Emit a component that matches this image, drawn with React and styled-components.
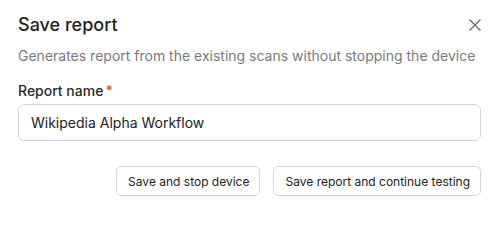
import { createGlobalStyle } from "styled-components";
import styled from "styled-components";

const GlobalStyle = createGlobalStyle`
  html, body {
    margin: 0;
    background: #fff;
    font-family: Inter, "Noto Sans", sans-serif;
  }
`;

const Dialog = styled.div`
  width: 501px;
  height: 214px;
  box-sizing: border-box;
  padding: 14px 20px 0 18px;
  background: #fff;
`;

const Header = styled.div`
  display: flex;
  justify-content: space-between;
  align-items: center;
`;

const Title = styled.h2`
  margin: 0;
  font-size: 18px;
  font-weight: 500;
  color: #1f1f1f;
  line-height: 22px;
`;

const CloseButton = styled.button`
  border: none;
  background: none;
  padding: 0;
  width: 12px;
  height: 12px;
  display: flex;
  align-items: center;
  justify-content: center;
  cursor: pointer;
  color: #6b6b6b;
`;

const Subtitle = styled.p`
  margin: 10px 0 0;
  font-size: 14px;
  line-height: 20px;
  color: #7a7a7a;
`;

const Label = styled.label`
  display: block;
  margin-top: 16px;
  font-size: 14px;
  font-weight: 500;
  line-height: 18px;
  color: #2a2a2a;
`;

const Required = styled.span`
  color: #e5484d;
  margin-left: 2px;
`;

const Input = styled.input`
  display: block;
  box-sizing: border-box;
  width: 100%;
  height: 37px;
  margin-top: 4px;
  padding: 0 12px;
  border: 1px solid #d6d6d6;
  border-radius: 6px;
  font-family: inherit;
  font-size: 14px;
  color: #222;
  outline: none;
`;

const Footer = styled.div`
  display: flex;
  justify-content: flex-end;
  gap: 13px;
  margin-top: 25px;
`;

const Button = styled.button`
  height: 30px;
  padding: 0 10px 0 11px;
  border: 1px solid #d6d6d6;
  border-radius: 5px;
  background: #fff;
  font-family: inherit;
  font-size: 12px;
  color: #222;
  cursor: pointer;
`;

export default function App() {
  return (
    <>
      <GlobalStyle />
      <Dialog>
        <Header>
          <Title>Save report</Title>
          <CloseButton aria-label="Close">
            <svg width="12" height="12" viewBox="0 0 12 12" fill="none">
              <path
                d="M1 1L11 11M11 1L1 11"
                stroke="currentColor"
                strokeWidth="1.4"
                strokeLinecap="round"
              />
            </svg>
          </CloseButton>
        </Header>
        <Subtitle>
          Generates report from the existing scans without stopping the device
        </Subtitle>
        <Label htmlFor="report-name">
          Report name<Required>*</Required>
        </Label>
        <Input id="report-name" defaultValue="Wikipedia Alpha Workflow" />
        <Footer>
          <Button>Save and stop device</Button>
          <Button>Save report and continue testing</Button>
        </Footer>
      </Dialog>
    </>
  );
}
